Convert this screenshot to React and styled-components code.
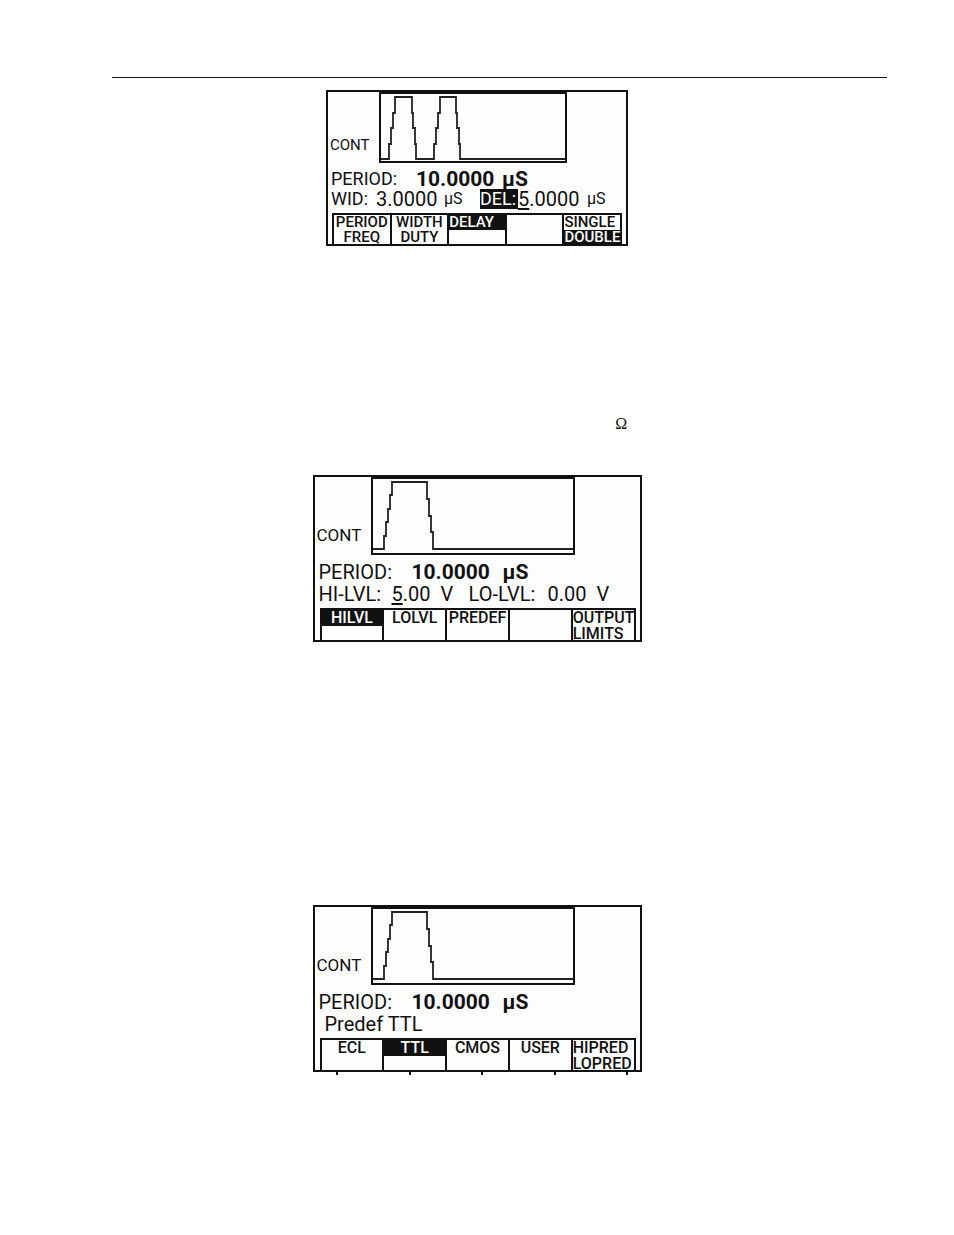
import React from 'react';
import styled, { createGlobalStyle } from 'styled-components';

const GlobalStyle = createGlobalStyle`
  body {
    margin: 0;
    background: #fff;
    color: #111;
    font-family: Roboto, 'Liberation Sans', sans-serif;
  }
`;

// vertical edge made of short steps, like on the LCD
const edge = (x1, y1, x2, y2, steps) => {
  let d = '';
  for (let i = 0; i < steps; i++) {
    const x = Math.round(x1 + ((x2 - x1) * i) / (steps - 1));
    const y = Math.round(y1 + ((y2 - y1) * (i + 1)) / steps);
    d += ` H${x} V${y}`;
  }
  return d;
};

const wavePath = ({ pulses, low, high, width, rise, fall }) => {
  let d = `M0 ${low}`;
  pulses.forEach(([a, b, c, e]) => {
    d += edge(a, low, b, high, rise) + edge(c, high, e, low, fall);
  });
  return `${d} H${width}`;
};

const doublePulse = {
  width: 184,
  height: 67,
  low: 65,
  high: 3,
  rise: 4,
  fall: 4,
  pulses: [
    [8, 14, 31, 35],
    [53, 59, 75, 79],
  ],
};

const singlePulse = {
  width: 200,
  height: 74,
  low: 70,
  high: 3,
  rise: 5,
  fall: 4,
  pulses: [[11, 19, 54, 60]],
};

const Screen = ({ wave, large, children, keys }) => (
  <SScreen $large={large}>
    <STop>
      <SMode $large={large}>CONT</SMode>
      <SScope>
        <svg
          width={wave.width}
          height={wave.height}
          viewBox={`0 0 ${wave.width} ${wave.height}`}
        >
          <path
            d={wavePath(wave)}
            fill='none'
            stroke='#222'
            strokeWidth='1.8'
          />
        </svg>
      </SScope>
    </STop>
    <SReadings $large={large}>{children}</SReadings>
    <SKeys $large={large}>
      {keys.map((key, i) => (
        <SKey
          key={i}
          type='button'
          $large={large}
          $align={key.align}
          aria-label={key.top ? undefined : 'Unused key'}
        >
          <SKeyLine $on={key.on === 'top'}>{key.top}</SKeyLine>
          <SKeyLine $on={key.on === 'bottom'}>{key.bottom}</SKeyLine>
        </SKey>
      ))}
    </SKeys>
  </SScreen>
);

export default () => {
  return (
    <SPage>
      <GlobalStyle />
      <SRule />

      <Screen
        wave={doublePulse}
        keys={[
          { top: 'PERIOD', bottom: 'FREQ' },
          { top: 'WIDTH', bottom: 'DUTY' },
          { top: 'DELAY', on: 'top', align: 'left' },
          {},
          { top: 'SINGLE', bottom: 'DOUBLE', on: 'bottom', align: 'left' },
        ]}
      >
        <SRow $cols='85px 86px auto'>
          <span>PERIOD:</span>
          <SStrong>10.0000</SStrong>
          <SStrong>μS</SStrong>
        </SRow>
        <SRow $cols='45px 68px 36px 38px 69px auto'>
          <span>WID:</span>
          <SValue>3.0000</SValue>
          <SUnit>μS</SUnit>
          <SInverse>DEL:</SInverse>
          <SValue>
            <SCursor>5</SCursor>.0000
          </SValue>
          <SUnit>μS</SUnit>
        </SRow>
      </Screen>

      <SNote>Ω</SNote>

      <Screen
        large
        wave={singlePulse}
        keys={[
          { top: 'HILVL', on: 'top' },
          { top: 'LOLVL' },
          { top: 'PREDEF' },
          {},
          { top: 'OUTPUT', bottom: 'LIMITS', align: 'left' },
        ]}
      >
        <SRow $cols='93px 91px auto'>
          <span>PERIOD:</span>
          <SStrong>10.0000</SStrong>
          <SStrong>μS</SStrong>
        </SRow>
        <SRow $cols='73px 49px 28px 79px 49px auto'>
          <span>HI-LVL:</span>
          <SValue>
            <SCursor>5</SCursor>.00
          </SValue>
          <span>V</span>
          <span>LO-LVL:</span>
          <SValue>0.00</SValue>
          <span>V</span>
        </SRow>
      </Screen>

      <SSpacer />

      <Screen
        large
        wave={singlePulse}
        keys={[
          { top: 'ECL' },
          { top: 'TTL', on: 'top' },
          { top: 'CMOS' },
          { top: 'USER' },
          { top: 'HIPRED', bottom: 'LOPRED', align: 'left' },
        ]}
      >
        <SRow $cols='93px 91px auto'>
          <span>PERIOD:</span>
          <SStrong>10.0000</SStrong>
          <SStrong>μS</SStrong>
        </SRow>
        <SRow $cols='auto' $indent>
          <span>Predef TTL</span>
        </SRow>
      </Screen>
      <STicks>
        {[1, 2, 3, 4, 5].map((n) => (
          <STick key={n} />
        ))}
      </STicks>
    </SPage>
  );
};

const SPage = styled.main`
  display: flex;
  flex-direction: column;
  align-items: center;
  padding: 77px 0 160px;
`;

const SRule = styled.hr`
  align-self: stretch;
  height: 1px;
  margin: 0 67px 12px 112px;
  border: 0;
  background: #111;
`;

const SScreen = styled.section`
  box-sizing: border-box;
  width: ${(p) => (p.$large ? 329 : 302)}px;
  border: 2px solid #111;
  background: #fdfdfd;
  font-size: ${(p) => (p.$large ? 20 : 18)}px;
  white-space: nowrap;
`;

const STop = styled.div`
  display: flex;
  align-items: flex-end;
`;

const SMode = styled.div`
  box-sizing: border-box;
  width: ${(p) => (p.$large ? 56 : 51)}px;
  padding: 0 0 ${(p) => (p.$large ? 12 : 10)}px 2px;
  font-size: ${(p) => (p.$large ? 17 : 15)}px;
  line-height: 16px;
`;

const SScope = styled.div`
  border: 2px solid #111;

  svg {
    display: block;
  }
`;

const SReadings = styled.div`
  padding: ${(p) => (p.$large ? '6px 4px 3px' : '6px 3px 4px')};
  line-height: ${(p) => (p.$large ? 22 : 20)}px;
`;

const SRow = styled.div`
  display: grid;
  grid-template-columns: ${(p) => p.$cols};
  padding-left: ${(p) => (p.$indent ? 6 : 0)}px;
`;

const SValue = styled.span`
  font-size: 20px;
`;

const SStrong = styled.strong`
  font-size: 21px;
  font-weight: 700;
`;

const SUnit = styled.span`
  font-size: 16px;
`;

const SInverse = styled.span`
  background: #111;
  color: #fff;
`;

const SCursor = styled.span`
  text-decoration: underline;
  text-underline-offset: 2px;
`;

const SKeys = styled.div`
  display: flex;
  margin: ${(p) => (p.$large ? '0 4px 0 5px' : '0 4px')};
  border: solid #111;
  border-width: 2px 2px 0 0;
`;

const SKey = styled.button`
  display: grid;
  flex: 1 1 0;
  min-width: 0;
  grid-template-rows: ${(p) => (p.$large ? '16px 14px' : '15px 14px')};
  padding: 0;
  border: 0;
  border-left: 2px solid #111;
  background: transparent;
  color: #111;
  font-family: inherit;
  font-size: ${(p) => (p.$large ? 16 : 15)}px;
  font-weight: 500;
  line-height: ${(p) => (p.$large ? 15 : 14)}px;
  text-align: ${(p) => p.$align || 'center'};
`;

const SKeyLine = styled.span`
  background: ${(p) => (p.$on ? '#111' : 'transparent')};
  color: ${(p) => (p.$on ? '#fff' : 'inherit')};
`;

const SNote = styled.p`
  align-self: stretch;
  margin: 169px 0 42px;
  padding-left: 64.5%;
  font-family: 'Liberation Serif', serif;
  font-size: 16px;
  line-height: 18px;
`;

const SSpacer = styled.div`
  height: 263px;
`;

const STicks = styled.div`
  display: flex;
  justify-content: space-between;
  width: 292px;
  padding-left: 10px;
`;

const STick = styled.span`
  width: 2px;
  height: 3px;
  background: #111;
`;
